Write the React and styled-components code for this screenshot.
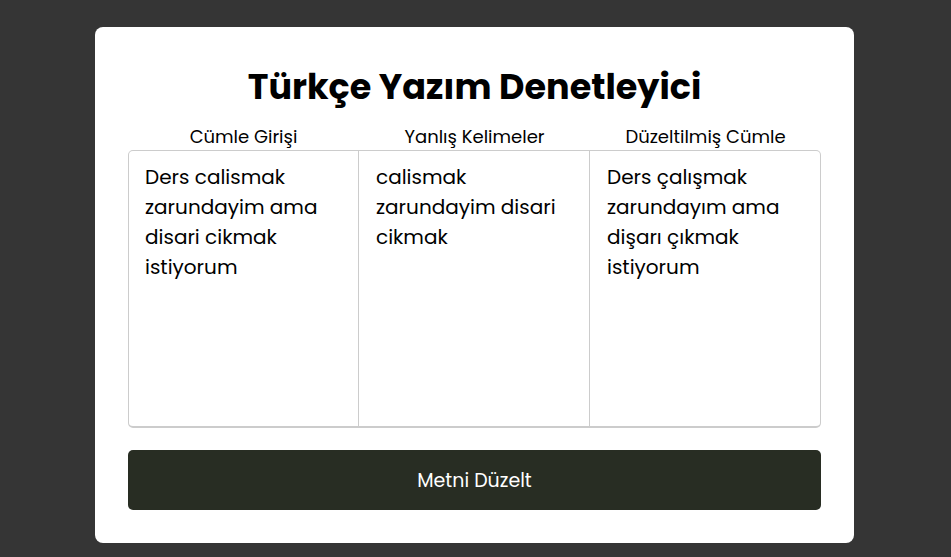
import React from "react";
import styled, { createGlobalStyle } from "styled-components";

const GlobalStyle = createGlobalStyle`
  * { box-sizing: border-box; }
  body {
    margin: 0;
    background: #353535;
    font-family: Poppins, Inter, "Open Sans", sans-serif;
    color: #000;
  }
`;

const Page = styled.main`
  min-height: 100vh;
  display: flex;
  justify-content: center;
  align-items: flex-start;
  padding: 27px 97px 14px 95px;
`;

const Card = styled.form`
  width: 100%;
  padding: 33px;
  background: #fff;
  border-radius: 8px;
`;

const Title = styled.h1`
  margin: 0 0 10px;
  text-align: center;
  font-size: 35px;
  line-height: 54px;
  font-weight: 700;
`;

const Columns = styled.div`
  display: grid;
  grid-template-columns: repeat(3, 1fr);
`;

const Column = styled.div`
  display: flex;
  flex-direction: column;
`;

const Label = styled.label`
  text-align: center;
  font-size: 18px;
  line-height: 26px;
`;

const TextArea = styled.textarea`
  display: block;
  width: 100%;
  height: 278px;
  padding: 11px 16px;
  border: 1px solid #ccc;
  border-bottom-width: 2px;
  border-left-width: ${(p) => (p.$edge === "left" ? "1px" : "0")};
  padding-left: ${(p) => (p.$edge === "left" ? "16px" : "17px")};
  border-radius: ${(p) =>
    p.$edge === "left" ? "5px 0 0 5px" : p.$edge === "right" ? "0 5px 5px 0" : "0"};
  background: #fff;
  color: #000;
  font-family: inherit;
  font-size: 20px;
  line-height: 30px;
  resize: none;
  outline: none;
`;

const SubmitButton = styled.button`
  display: block;
  width: 100%;
  height: 60px;
  margin-top: 22px;
  border: 0;
  border-radius: 5px;
  background: #282d23;
  color: #fff;
  font-family: inherit;
  font-size: 19px;
  cursor: pointer;
`;

const fields = [
  {
    id: "input",
    label: "Cümle Girişi",
    edge: "left",
    text: "Ders calismak zarundayim ama disari cikmak istiyorum",
  },
  {
    id: "errors",
    label: "Yanlış Kelimeler",
    edge: "none",
    text: "calismak zarundayim disari cikmak",
  },
  {
    id: "output",
    label: "Düzeltilmiş Cümle",
    edge: "right",
    text: "Ders çalışmak zarundayım ama dişarı çıkmak istiyorum",
  },
];

export default function App() {
  return (
    <Page lang="tr">
      <GlobalStyle />
      <Card onSubmit={(e) => e.preventDefault()}>
        <Title>Türkçe Yazım Denetleyici</Title>
        <Columns>
          {fields.map((f) => (
            <Column key={f.id}>
              <Label htmlFor={f.id}>{f.label}</Label>
              <TextArea
                id={f.id}
                $edge={f.edge}
                defaultValue={f.text}
                readOnly={f.id !== "input"}
                spellCheck={false}
              />
            </Column>
          ))}
        </Columns>
        <SubmitButton type="submit">Metni Düzelt</SubmitButton>
      </Card>
    </Page>
  );
}
